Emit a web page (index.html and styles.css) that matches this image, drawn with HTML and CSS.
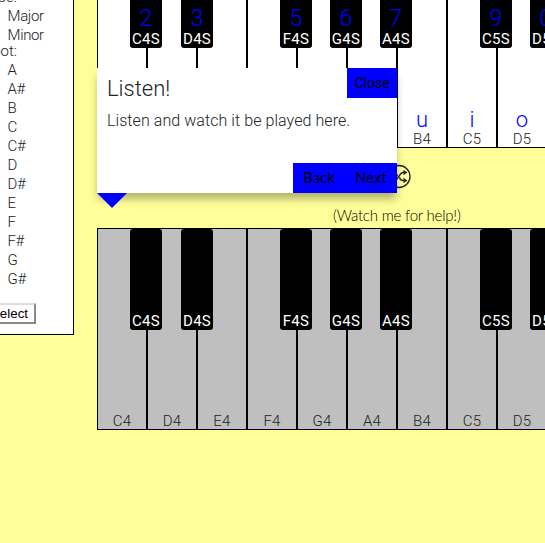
FILE: index.html
```
<!DOCTYPE html>
<html lang="en">
<head>
<meta charset="utf-8">
<title>Piano</title>
<link rel="stylesheet" href="styles.css">
</head>
<body>
<aside class="sidebar">
  <div class="legend">Type:</div>
  <label>Major</label><label>Minor</label>
  <div class="legend root">Root:</div>
  <label>A</label><label>A#</label><label>B</label><label>C</label><label>C#</label><label>D</label><label>D#</label><label>E</label><label>F</label><label>F#</label><label>G</label><label>G#</label>
  <button class="select">Select</button>
</aside>
<main class="main">
  <div class="piano top">
    <div class="key"><span class="note">C4</span><div class="black"><b>2</b><span>C4S</span></div></div>
    <div class="key"><span class="note">D4</span><div class="black wide"><b>3</b><span>D4S</span></div></div>
    <div class="key"><span class="note">E4</span></div>
    <div class="key"><span class="note">F4</span><div class="black"><b>5</b><span>F4S</span></div></div>
    <div class="key"><span class="note">G4</span><div class="black"><b>6</b><span>G4S</span></div></div>
    <div class="key"><span class="note">A4</span><div class="black"><b>7</b><span>A4S</span></div></div>
    <div class="key"><b>u</b><span class="note">B4</span></div>
    <div class="key"><b>i</b><span class="note">C5</span><div class="black"><b>9</b><span>C5S</span></div></div>
    <div class="key"><b>o</b><span class="note">D5</span><div class="black"><b>0</b><span>D5S</span></div></div>
  </div>
  <div class="controls">
    <svg class="shuffle" width="24" height="24" viewBox="0 0 24 24" fill="none" stroke="#222" stroke-width="1.3"><circle cx="10" cy="12.500" r="11"/><path d="M2 8.500h3c2 0 3 2 3.500 4M18 16.500h-4c-2 0-3-1-3.500-3M18 8.500h-4c-4 0-4 8-9 8H2M14.500 6.500l2.500 2-2.500 2M14.500 14.500l2.500 2-2.500 2"/></svg>
  </div>
  <p class="help">(Watch me for help!)</p>
  <div class="piano gray">
    <div class="key"><span class="note">C4</span><div class="black"><span>C4S</span></div></div>
    <div class="key"><span class="note">D4</span><div class="black wide"><span>D4S</span></div></div>
    <div class="key"><span class="note">E4</span></div>
    <div class="key"><span class="note">F4</span><div class="black"><span>F4S</span></div></div>
    <div class="key"><span class="note">G4</span><div class="black"><span>G4S</span></div></div>
    <div class="key"><span class="note">A4</span><div class="black"><span>A4S</span></div></div>
    <div class="key"><span class="note">B4</span></div>
    <div class="key"><span class="note">C5</span><div class="black"><span>C5S</span></div></div>
    <div class="key"><span class="note">D5</span><div class="black"><span>D5S</span></div></div>
  </div>
  <section class="popover">
    <button class="action close">Close</button>
    <h2>Listen!</h2>
    <p>Listen and watch it be played here.</p>
    <div class="actions"><button class="action">Back</button><button class="action">Next</button></div>
  </section>
</main>
</body>
</html>
```
FILE: styles.css
```
* { box-sizing: border-box; }
body {
  margin: 0;
  width: 545px;
  height: 543px;
  overflow: hidden;
  background: #ffff99;
  color: #222;
  font: 300 15px/19px Roboto, sans-serif;
  display: flex;
  align-items: flex-start;
}
.sidebar {
  width: 74px;
  height: 335px;
  flex: none;
  display: flex;
  flex-direction: column;
  overflow: hidden;
  background: #fff;
  border: 1px solid #000;
  border-width: 0 1px 1px 0;
}
.sidebar label { height: 19px; flex: none; padding-left: 7.500px; letter-spacing: -.35px; }
.legend {
  width: 17px;
  height: 19px;
  flex: none;
  display: flex;
  justify-content: flex-end;
  margin-top: -12px;
}
.legend.root { margin-top: -3px; }
.select {
  width: 64px;
  height: 21px;
  flex: none;
  margin: 14px 0 0 -28px;
  padding: 0 6px;
  text-align: right;
  background: #fff;
  border: 2px outset #ddd;
  font: 13.330px/17px "Liberation Sans", sans-serif;
}
.main { position: relative; flex: none; width: 448px; margin-left: 23px; }
.piano { display: flex; height: 202px; width: 450px; }
.piano.top { margin-top: -54px; }
.key {
  position: relative;
  flex: none;
  width: 50px;
  height: 202px;
  display: flex;
  flex-direction: column;
  align-items: center;
  justify-content: flex-end;
  background: #fff;
  border: 1px solid #000;
}
.gray .key { background: #bfbfbf; }
.key b { color: #00f; font-weight: 300; font-size: 22px; line-height: 24px; }
.note { line-height: 15px; letter-spacing: .2px; }
.black {
  position: absolute;
  z-index: 1;
  top: 0;
  left: 32px;
  width: 32px;
  height: 101px;
  display: flex;
  flex-direction: column;
  align-items: center;
  justify-content: flex-end;
  background: #000;
  color: #fff;
  border-radius: 3px;
}
.black.wide { left: 33px; }
.black b { font-size: 23px; line-height: 25px; }
.black span { font-weight: 400; line-height: 17px; letter-spacing: .25px; }
.controls { height: 58px; padding: 16px 0 0 291px; }
.shuffle { display: block; overflow: visible; margin-left: 1px; }
.help { margin: 0 0 3px; padding-left: 236px; font-family: Lato, sans-serif; font-size: 15px; font-weight: 300; color: #000; letter-spacing: -.2px; }
.popover {
  position: absolute;
  z-index: 2;
  left: 0;
  top: 68px;
  width: 300px;
  height: 125px;
  padding: 10px;
  background: #fff;
  box-shadow: 0 7px 8px -1px rgba(0, 0, 0, .3);
}
.popover::after {
  content: "";
  position: absolute;
  left: 0;
  top: 125px;
  border: 15px solid transparent;
  border-top-color: #00f;
  border-bottom: 0;
}
.popover h2 { margin: 0; font-size: 22px; line-height: 22px; font-weight: 300; }
.popover p { margin: 11px 0 0; font-size: 16px; line-height: 20px; letter-spacing: .07px; }
.action {
  height: 30px;
  width: 52px;
  padding: 0 0 2px;
  border: 0;
  background: #00f;
  color: #000;
  font: 400 15px Lato, sans-serif;
}
.close { position: absolute; right: 0; top: 0; width: 50px; padding: 0; font-family: Roboto, sans-serif; font-size: 14px; }
.actions { position: absolute; right: 0; bottom: 0; display: flex; }
```
